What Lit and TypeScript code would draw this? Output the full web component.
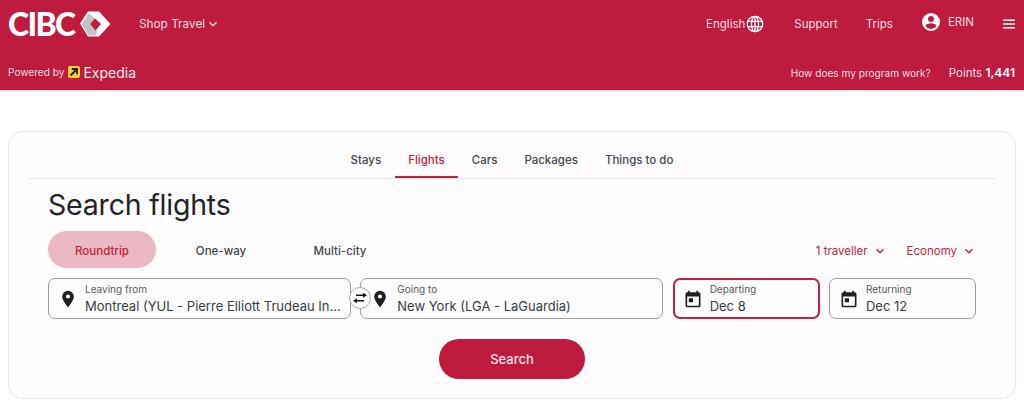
import { LitElement, html, css, svg } from 'lit';
import { customElement } from 'lit/decorators.js';

const chevron = svg`<path d="M2.500 4.200 6 7.700l3.500-3.500" fill="none" stroke="currentColor" stroke-width="1.500"/>`;
const pin = svg`<path fill="#1f2024" fill-rule="evenodd" d="M12 2a7 7 0 0 0-7 7c0 5.200 7 13 7 13s7-7.800 7-13a7 7 0 0 0-7-7zm0 9.500a2.500 2.500 0 1 1 0-5 2.500 2.500 0 0 1 0 5z"/>`;
const calendar = svg`<path fill="#1f2024" fill-rule="evenodd" d="M19 4h-1V2h-2v2H8V2H6v2H5a2 2 0 0 0-2 2v14a2 2 0 0 0 2 2h14a2 2 0 0 0 2-2V6a2 2 0 0 0-2-2zm0 16H5V9h14v11zM7 11h5v5H7z"/>`;

@customElement('app-root')
export class AppRoot extends LitElement {
  static styles = css`
    :host {
      display: block;
      height: 407px;
      overflow: hidden;
      background: #fff;
      font-family: Inter, 'Liberation Sans', sans-serif;
      color: #313338;
    }
    header {
      height: 90px;
      background: #bf1b3e;
      color: #f6dfe4;
      border-bottom: 1px solid #e6dde0;
      display: flex;
      flex-direction: column;
    }
    .top {
      height: 48px;
      display: flex;
      align-items: center;
      padding: 0 9px 0 8px;
      font-size: 11.500px;
    }
    .logo {
      display: flex;
      align-items: center;
      gap: 5px;
      width: 131px;
    }
    .logo b {
      font: 900 32px/1 Lato, sans-serif;
      color: #fff;
      letter-spacing: -1.700px;
    }
    .shop {
      display: flex;
      align-items: center;
      gap: 2px;
      font-size: 11.800px;
    }
    .shop svg {
      width: 12px;
      height: 12px;
    }
    .nav {
      margin-left: auto;
      display: flex;
      align-items: center;
    }
    .lang {
      display: flex;
      align-items: center;
      gap: 1px;
      margin-right: 30px;
    }
    .support {
      margin-right: 28px;
    }
    .trips {
      margin-right: 29px;
    }
    .user {
      display: flex;
      align-items: center;
      gap: 8px;
      margin: -4px 29px 0 0;
    }
    .bottom {
      flex: 1;
      display: flex;
      align-items: center;
      justify-content: space-between;
      padding: 6px 9px 0 8px;
      font-size: 10.100px;
    }
    .powered {
      display: flex;
      align-items: center;
    }
    .badge {
      width: 12px;
      height: 12px;
      margin: 0 3px 0 4px;
    }
    .expedia {
      font-size: 14px;
      color: #fbeef0;
    }
    .points {
      display: flex;
      align-items: baseline;
      gap: 18px;
    }
    .points .pts {
      font-size: 11.500px;
    }
    .points b {
      font-weight: 600;
      font-size: 12px;
      color: #fff;
    }
    main {
      padding: 40px 8px 0;
      background: #fff;
    }
    .card {
      height: 268px;
      box-sizing: border-box;
      border: 1px solid #e8e8ea;
      border-radius: 14px;
      background: #fefcfd;
      padding: 0 19px;
      display: flex;
      flex-direction: column;
    }
    .tabs {
      height: 47px;
      flex: none;
      box-sizing: border-box;
      border-bottom: 1px solid #e8e8ea;
      display: flex;
      justify-content: center;
      font-size: 11.500px;
    }
    .tab {
      padding: 10px 13.500px 0;
      display: flex;
      align-items: center;
      height: 46px;
      box-sizing: border-box;
      color: #44464b;
      font-weight: 500;
    }
    .tab.on {
      color: #c5213f;
      border-bottom: 2px solid #c5213f;
      padding-top: 12px;
    }
    .body {
      padding: 0 20px;
      display: flex;
      flex-direction: column;
    }
    h1 {
      margin: 8px 0 0;
      font-size: 28.500px;
      line-height: 36px;
      font-weight: 400;
      color: #222327;
      letter-spacing: -0.2px;
    }
    .modes {
      margin-top: 8px;
      display: flex;
      align-items: center;
      gap: 11px;
      height: 37px;
      font-size: 11.500px;
      font-weight: 500;
      color: #44464b;
    }
    .pill {
      width: 108px;
      height: 37px;
      padding-top: 2px;
      box-sizing: border-box;
      display: flex;
      align-items: center;
      justify-content: center;
      border-radius: 19px;
    }
    .pill.on {
      background: #ecb8c3;
      color: #c5213f;
    }
    .opts {
      margin: 2px 1px 0 auto;
      display: flex;
      gap: 21px;
      color: #c5213f;
      font-weight: 400;
    }
    .opts span {
      display: flex;
      align-items: center;
      gap: 6px;
    }
    .opts svg {
      width: 12px;
      height: 12px;
    }
    .fields {
      margin-top: 10px;
      display: grid;
      grid-template-columns: 303px 303px 147px 147px;
      column-gap: 9.330px;
    }
    .field {
      position: relative;
      height: 41px;
      box-sizing: border-box;
      border: 1px solid #9c9da1;
      border-radius: 7px;
      background: #fefdfd;
      display: flex;
      align-items: center;
      padding-left: 9px;
      gap: 7px;
      min-width: 0;
    }
    .field.focus {
      border: 2px solid #c5213f;
      padding-left: 8px;
    }
    .field > svg {
      width: 20px;
      height: 20px;
      flex: none;
    }
    .text {
      min-width: 0;
      display: flex;
      flex-direction: column;
      padding-top: 1px;
    }
    .text small {
      font-size: 10px;
      line-height: 13px;
      color: #55575c;
    }
    .text span {
      font-size: 13px;
      line-height: 20px;
      color: #3a3c41;
      white-space: nowrap;
    }
    .swap {
      position: absolute;
      right: -21px;
      top: 8px;
      width: 22px;
      height: 22px;
      box-sizing: border-box;
      z-index: 1;
      border-radius: 50%;
      border: 1px solid #a8a9ad;
      background: #fff;
      display: flex;
      align-items: center;
      justify-content: center;
    }
    .swap svg {
      width: 16px;
      height: 16px;
    }
    .go {
      align-self: center;
      margin-top: 20px;
      width: 146px;
      height: 40px;
      border: 0;
      border-radius: 20px;
      background: #bf1b3e;
      color: #f8e4e8;
      font: 500 13px Inter, sans-serif;
    }
  `;

  render() {
    return html`
      <header>
        <div class="top">
          <div class="logo">
            <b>CIBC</b>
            <svg width="32" height="26" viewBox="0 0 32 26">
              <path fill="#fff" d="M1 12.500 9 .5h11l11.500 12.500L20 25.500H9z"/>
              <path fill="#c3c4c6" d="M2.500 13 10 2l6 5.500-5 5.500 7.500 7-2 4.500H10z"/>
              <path fill="#bf1b3e" d="M11 13l5-5.500 6 5.500-5.500 6.500z"/>
            </svg>
          </div>
          <span class="shop">Shop Travel <svg viewBox="0 0 12 12">${chevron}</svg></span>
          <div class="nav">
            <span class="lang">English
              <svg width="18" height="18" viewBox="0 0 18 18" fill="none" stroke="#fff" stroke-width="1.300">
                <circle cx="9" cy="9" r="7.700"/>
                <ellipse cx="9" cy="9" rx="3.500" ry="7.700"/>
                <path d="M9 1.300v15.400M1.800 6.300h14.400M1.800 11.700h14.400"/>
              </svg>
            </span>
            <span class="support">Support</span>
            <span class="trips">Trips</span>
            <span class="user">
              <svg width="18" height="18" viewBox="0 0 18 18">
                <path fill="#fff" fill-rule="evenodd" d="M9 0a9 9 0 1 0 0 18A9 9 0 0 0 9 0zm0 3a3 3 0 1 1 0 6 3 3 0 0 1 0-6zm0 13a6.800 6.800 0 0 1-5.500-2.900C3.600 11.300 7.200 10.300 9 10.300s5.400 1 5.500 2.800A6.800 6.800 0 0 1 9 16z"/>
              </svg>
              ERIN
            </span>
            <svg width="12" height="10" viewBox="0 0 12 10" fill="#fff">
              <path d="M0 .5h12v1.400H0zM0 4.300h12v1.400H0zM0 8.100h12v1.400H0z"/>
            </svg>
          </div>
        </div>
        <div class="bottom">
          <span class="powered">Powered by
            <svg class="badge" viewBox="0 0 12 12">
              <rect width="12" height="12" rx="2" fill="#fbd12e"/>
              <path d="M2.500 9.500 8 4M3.800 3h5.200v5.200" fill="none" stroke="#1c1c28" stroke-width="1.800"/>
            </svg>
            <span class="expedia">Expedia</span>
          </span>
          <span class="points">
            <span>How does my program work?</span>
            <span class="pts">Points <b>1,441</b></span>
          </span>
        </div>
      </header>
      <main>
        <div class="card">
          <nav class="tabs">
            <span class="tab">Stays</span>
            <span class="tab on">Flights</span>
            <span class="tab">Cars</span>
            <span class="tab">Packages</span>
            <span class="tab">Things to do</span>
          </nav>
          <div class="body">
            <h1>Search flights</h1>
            <div class="modes">
              <span class="pill on">Roundtrip</span>
              <span class="pill">One-way</span>
              <span class="pill">Multi-city</span>
              <div class="opts">
                <span>1 traveller <svg viewBox="0 0 12 12">${chevron}</svg></span>
                <span>Economy <svg viewBox="0 0 12 12">${chevron}</svg></span>
              </div>
            </div>
            <div class="fields">
              <div class="field">
                <svg viewBox="0 0 24 24">${pin}</svg>
                <div class="text"><small>Leaving from</small><span>Montreal (YUL - Pierre Elliott Trudeau In...</span></div>
                <div class="swap">
                  <svg viewBox="0 0 16 16" fill="#111">
                    <path d="M4 4.500h7V2.700L15 5.200l-4 2.500V5.900H4zM12 10.100H5V8.300L1 10.800l4 2.500v-1.800h7z"/>
                  </svg>
                </div>
              </div>
              <div class="field">
                <svg viewBox="0 0 24 24">${pin}</svg>
                <div class="text"><small>Going to</small><span>New York (LGA - LaGuardia)</span></div>
              </div>
              <div class="field focus">
                <svg viewBox="0 0 24 24">${calendar}</svg>
                <div class="text"><small>Departing</small><span>Dec 8</span></div>
              </div>
              <div class="field">
                <svg viewBox="0 0 24 24">${calendar}</svg>
                <div class="text"><small>Returning</small><span>Dec 12</span></div>
              </div>
            </div>
            <button class="go">Search</button>
          </div>
        </div>
      </main>
    `;
  }
}
